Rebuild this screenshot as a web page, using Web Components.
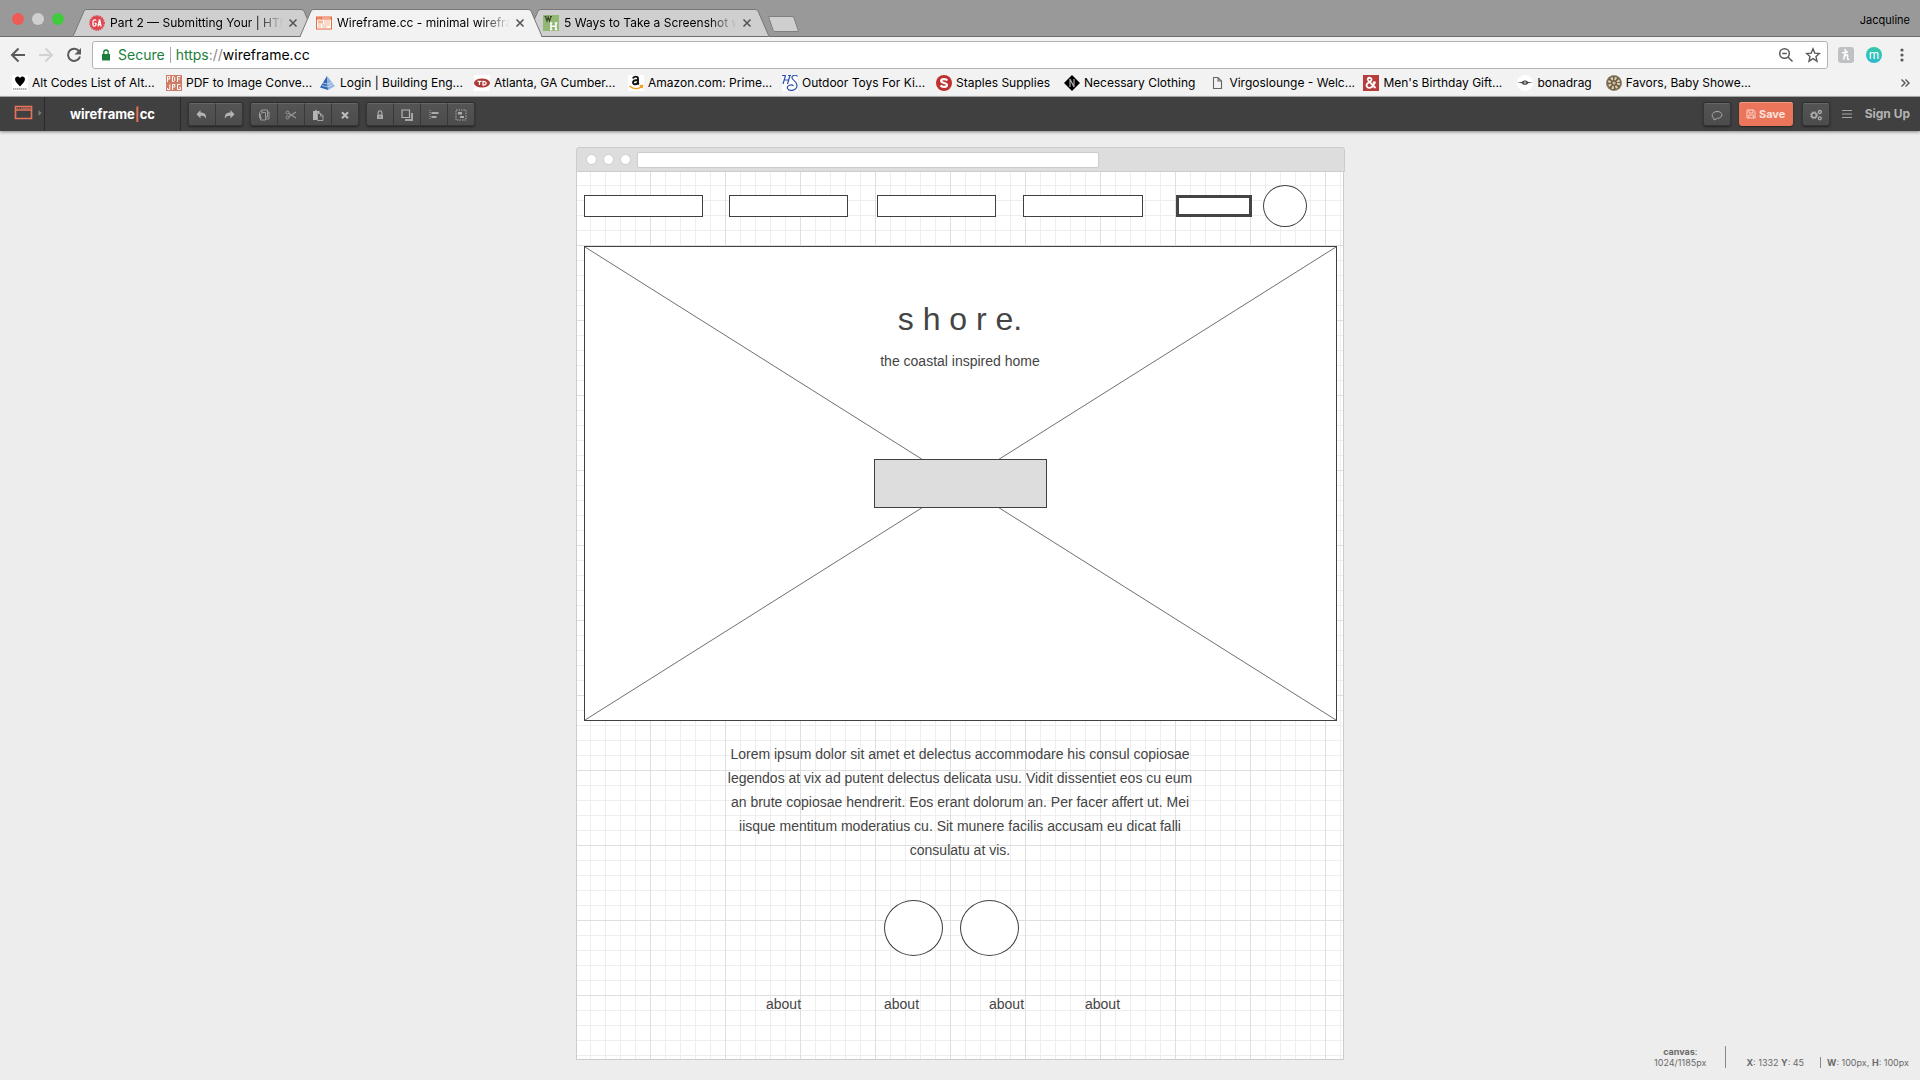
<!DOCTYPE html>
<html lang="en">
<head>
<meta charset="utf-8">
<title>Wireframe.cc - minimal wireframing tool</title>
<style>
  html, body { margin: 0; }
  body { font: 12px/16px Inter, "Liberation Sans", sans-serif; color: #000; background: #ededed; }
</style>
</head>
<body>
<app-window></app-window>

<script>
const ICONS = {
  ga: ['0 0 16 16', '<circle cx="8" cy="8" r="7" fill="#e0444f"/><circle cx="8" cy="8" r="7.2" fill="none" stroke="#e0444f" stroke-width="1.4" stroke-dasharray="1.3 1"/><path d="M7 5.6C6.700 4.500 4 4.400 4 6.500v3c0 2.100 3 2 3 0V8.300H5.600M9 11.500 10.400 4.800h.3L12.100 11.500M9.400 9.500h2.300" fill="none" stroke="#fff" stroke-width="1.300"/>'],
  wire: ['0 0 16 16', '<path fill="#e8693f" d="M0 1.500h16v13H0z"/><path fill="#fff" d="M1 4.500h14v9H1z"/><path stroke="#fff" stroke-width=".8" d="M1.500 3h1M3.500 3h1M6 3h8.500"/><path fill="#f4b493" d="M2 5.500h5v3H2zM8 5.500h6v1H8zM8 7.500h6v1H8zM2 9.500h3v1H2zM6 9.500h8v1H6zM2 11.500h3v1H2zM6 11.500h5v1H6z"/>'],
  wikihow: ['0 0 16 16', '<path fill="#93b874" d="M0 0h16v16H0z"/><path d="M1.500 1.500h2M2.500 1.500 4 6l1.200-4L6.500 6 8 1.500M7 1.500h2" fill="none" stroke="#37492a" stroke-width="1.200"/><path d="M8 8v6.500M13 8v6.500M8 11.200h5M7 8h2.300M11.800 8h2.500M7 14.500h2.300M11.800 14.500h2.500" fill="none" stroke="#fff" stroke-width="1.500"/>'],
  close: ['0 0 10 10', '<path d="M1.500 1.500l7 7M8.500 1.500l-7 7" stroke="#555" stroke-width="1.600"/>'],
  back: ['0 0 16 16', '<path d="M15 8H2M8.500 1.500 2 8l6.500 6.500" fill="none" stroke="#5a5a5a" stroke-width="2"/>'],
  forward: ['0 0 16 16', '<path d="M1 8h13M7.500 1.500 14 8l-6.500 6.500" fill="none" stroke="#d2d2d2" stroke-width="2"/>'],
  reload: ['0 0 16 16', '<path d="M13.300 4.500A6.100 6.100 0 1 0 14 9.500" fill="none" stroke="#5a5a5a" stroke-width="2"/><path d="M15 1v6.500H8.500z" fill="#5a5a5a"/>'],
  lock: ['0 0 10 12', '<path d="M1 5h8v6.500H1z" fill="#1b7f3b"/><path d="M2.800 5V3.200a2.200 2.200 0 0 1 4.400 0V5" fill="none" stroke="#1b7f3b" stroke-width="1.300"/>'],
  zoomout: ['0 0 16 16', '<circle cx="6.500" cy="6.500" r="4.800" fill="none" stroke="#5a5a5a" stroke-width="1.500"/><path d="M4.200 6.500h4.600M10.200 10.200l4.300 4.300" stroke="#5a5a5a" stroke-width="1.500"/>'],
  star: ['0 0 16 16', '<path d="M8 1.800l1.800 4.300 4.700.4-3.500 3.100 1 4.600L8 11.700l-4 2.500 1-4.600L1.500 6.500l4.700-.4z" fill="none" stroke="#5a5a5a" stroke-width="1.400"/>'],
  honey: ['0 0 16 16', '<rect width="16" height="16" rx="3" fill="#bfc1c3"/><path d="M6 3.200c1.800-.9 2.100.8 1.200 2.800L5.500 12.500M4 5.800l6-.9M6.300 10c1.200-2.700 3.900-2.900 3.300-.5-.5 2-.3 3.500 1.600 2.500" fill="none" stroke="#fff" stroke-width="1.500"/>'],
  kebab: ['0 0 4 14', '<circle cx="2" cy="2" r="1.600" fill="#5a5a5a"/><circle cx="2" cy="7" r="1.600" fill="#5a5a5a"/><circle cx="2" cy="12" r="1.600" fill="#5a5a5a"/>'],
  more: ['0 0 10 10', '<path d="M1.500 1.500 5 5 1.500 8.500M5.500 1.500 9 5 5.500 8.500" fill="none" stroke="#555" stroke-width="1.400"/>'],
  heart: ['0 0 16 16', '<path fill="#fff" d="M0 0h16v16H0z"/><path d="M8 11.500C5 8 3 6.500 3 4c0-3 4-3.500 5-1 1-2.500 5-2 5 1 0 2.500-2 4-5 7.500z"/><path d="M1 14h14" stroke="#666" stroke-dasharray="1 .5 2 .5"/>'],
  pdf: ['0 0 16 16', '<path fill="#cf7d66" d="M0 0h16v16H0z"/><path d="M1.500 7V1.500h2.300V4H1.500M6.500 1.500h1.200l1 1v3l-1 1H6.500zM11.500 7V1.500h3M11.500 4h2.300M3.800 9.500v5H1.500V13M6.500 15V9.500h2.300V12H6.500M14.300 9.500h-2.800v5h2.800v-2.300h-1" fill="none" stroke="#fff"/>'],
  pyramid: ['0 0 16 16', '<path fill="#2f66b4" d="M7 1 0 12.500 8 15z"/><path fill="#8fb3df" d="M7 1l8 10-7 4z"/><path d="M3 8l4.500 1L12 7.500M2 10.500l5.600 1.300 6-2.500" stroke="#dce9f7" stroke-width=".7" fill="none"/>'],
  td: ['0 0 16 16', '<path fill="#fff" d="M0 0h16v16H0z"/><ellipse cx="8" cy="8" rx="8" ry="4.600" fill="#ad3a37"/><path d="M3.500 6.400h4M5.500 6.400V10M9 6.400V10c4.200.2 4.200-3.700 0-3.600z" fill="none" stroke="#fff" stroke-width="1.300"/>'],
  amazon: ['0 0 16 16', '<path fill="#fff" d="M0 0h16v16H0z"/><path d="M5 3.500c.6-2.500 5-2.500 5 0v4.300c0 .8.300 1.200.8 1.700M10 5C6.500 5 5 5.700 5 7.500 5 10 9.500 9.800 10 7" fill="none" stroke="#111" stroke-width="1.900"/><path d="M1.500 11c3.500 3.300 9 3.300 12 .8M11.700 10.800l2.800-.2-.6 2.700" fill="none" stroke="#f49b1c" stroke-width="1.400"/>'],
  hs: ['0 0 16 16', '<path fill="#fff" d="M0 0h16v16H0z"/><path d="M3.500.5 1 9M8 .5 5.500 9M2 5h5M15.500 1.500C14-.5 9.500 0 10 3c.3 2.300 5 3 5 7.500 0 5-7.500 6.500-9.500 3-1.200-3 4-5 6-2.500M0 .5h4M6 .5h3" fill="none" stroke="#2c4fae" stroke-width="1.200"/>'],
  staples: ['0 0 16 16', '<circle cx="8" cy="8" r="8" fill="#bf3030"/><path d="M11.300 5.500C10 3.600 5.200 3.600 5.200 6c0 2.500 5.800 1.400 5.800 4 0 2.500-5 2.500-6.500.4" fill="none" stroke="#fff" stroke-width="2.200"/>'],
  diamond: ['0 0 16 16', '<path d="M8 0l8 8-8 8-8-8z"/><path d="M6 12V4l4 8V4" fill="none" stroke="#aaa" stroke-width="1.200"/>'],
  page: ['0 0 16 16', '<path d="M4.500 2.500h4.500l3.500 3.500v7.500h-8zM9 2.500V6h3.500" fill="none" stroke="#666" stroke-width="1.100"/>'],
  amp: ['0 0 16 16', '<path fill="#b73d3d" d="M0 0h16v16H0z"/><path d="M12.500 13 5.500 6C3.500 3.500 5.500 2.500 7 2.800c2 .4 2 2.500.3 3.600L5 8c-3 2.500-.8 5 1.500 4.800 2.500-.2 4.300-2.300 5-5.300M9.800 7.500h3" fill="none" stroke="#fff" stroke-width="1.800"/>'],
  bona: ['0 0 16 16', '<circle cx="8" cy="8" r="8" fill="#fff"/><path d="M0 7.600 5 7c1-2 5-2 6 0l5 .6-5 .7c-1 2-5 2-6 0z" fill="#444"/><circle cx="8" cy="7.600" r="1.300" fill="#aaa"/>'],
  favor: ['0 0 16 16', '<circle cx="8" cy="8" r="7.800" fill="#6d5c48"/><circle cx="8" cy="8" r="4.600" fill="none" stroke="#dccfae" stroke-width="3" stroke-dasharray="2 1.610"/><circle cx="8" cy="8" r="1.600" fill="#cdbf9e"/><circle cx="8" cy="8" r="7.300" fill="none" stroke="#a8977c" stroke-dasharray="1.500 1"/>'],
  logo: ['0 0 20 16', '<path d="M1.500 1.500h16v12h-16zM1.500 5h16" fill="none" stroke="#e8735a" stroke-width="1.600"/><path d="M3 3.200h1M5 3.200h1M7 3.200h9" stroke="#e8735a" stroke-width=".9"/>'],
  caret: ['0 0 4 8', '<path d="M.5 1v6L3.500 4z" fill="#7d7d7d"/>'],
  undo: ['0 0 14 14', '<path d="M5.500 2v2.500c4 0 6.200 2 5.500 6.500-.6-2.500-2.300-3.500-5.500-3.300V10.500L1.500 6.200z" fill="#b3b3b3"/>'],
  redo: ['0 0 14 14', '<path d="M8.500 2v2.500C4.500 4.500 2.300 6.500 3 11c.6-2.500 2.300-3.500 5.500-3.300V10.500l4-4.300z" fill="#b3b3b3"/>'],
  copy: ['0 0 14 14', '<path d="M5 4.500V2h5.500v7H8.500M5 2 2.500 4.500v5.500H5M5 4.500h3.500V12H3.500V6.500zM10.500 4h1.500v7H8.500" fill="none" stroke="#9b9b9b"/>'],
  cut: ['0 0 14 14', '<circle cx="3.500" cy="4.500" r="1.500" fill="none" stroke="#999"/><circle cx="3.500" cy="9.500" r="1.500" fill="none" stroke="#999"/><path d="M4.800 5.200 12 10M4.800 8.800 12 4" stroke="#999" stroke-width="1.200"/>'],
  paste: ['0 0 14 14', '<path d="M2 3h2l1-1.500L6 3h2.500v2H6v7H2z" fill="#b5b5b5"/><path d="M6.500 5.500h3.500l2 2.200v4.800H6.500zM9.500 5.500V8H12" fill="none" stroke="#a2a2a2"/>'],
  del: ['0 0 14 14', '<path d="M4 4.300l6 6M10 4.300l-6 6" stroke="#bbb" stroke-width="2.200"/>'],
  padlock: ['0 0 14 14', '<path d="M4 6.500h6V11H4z" fill="#aaa"/><path d="M5.200 6.500V4.600a1.800 1.800 0 0 1 3.600 0v1.900" fill="none" stroke="#aaa" stroke-width="1.200"/><path d="M6.500 8h1v1.500h-1z" fill="#555"/>'],
  layers: ['0 0 14 14', '<path d="M2 2h7.500v7.500H2z" fill="none" stroke="#b5b5b5" stroke-width="1.200"/><path d="M11 5h2v8H5v-2h6z" fill="#a5a5a5"/>'],
  align: ['0 0 14 14', '<path d="M3 2v10" stroke="#aaa" stroke-dasharray="1 1"/><path d="M4.500 4h7v2h-7zM4.500 8h5v2h-5z" fill="#aaa"/>'],
  group: ['0 0 14 14', '<path d="M2 2h10v10H2z" fill="none" stroke="#aaa" stroke-dasharray="1.500 1"/><path d="M4 4h4v2.500H4zM6 8h4v2H6z" fill="#aaa"/>'],
  bubble: ['0 0 14 14', '<path d="M4 10.500C1 9 1.500 3.800 7 3.500c6.500 0 6.500 6.500.5 6.800L4 12z" fill="none" stroke="#aaa"/>'],
  disk: ['0 0 10 10', '<path d="M1 1h6.500L9 2.500V9H1zM3 1v3h4V1M2.800 9V6h4.500v3" fill="none" stroke="#fcd3c8"/>'],
  gears: ['0 0 14 14', '<circle cx="5" cy="7.200" r="2.400" fill="none" stroke="#b0b0b0" stroke-width="1.500"/><circle cx="5" cy="7.200" r="3.500" fill="none" stroke="#b0b0b0" stroke-width="1" stroke-dasharray="1.400 1.350"/><circle cx="10.800" cy="4" r="1.500" fill="none" stroke="#b0b0b0" stroke-width="1.300"/><circle cx="10.800" cy="10.300" r="1.500" fill="none" stroke="#b0b0b0" stroke-width="1.300"/>'],
  menu: ['0 0 10 10', '<path d="M0 1.500h10M0 5h10M0 8.500h10" stroke="#a5a5a5" stroke-width="1.200"/>']
};

const define = (name, html, setup) => {
  const template = document.createElement('template');
  template.innerHTML = html;
  customElements.define(name, class extends HTMLElement {
    constructor() {
      super();
      this.attachShadow({ mode: 'open' }).append(template.content.cloneNode(true));
    }
    connectedCallback() { if (setup) setup(this, this.shadowRoot); }
  });
};

/* Icon: name picks the drawing, --s / --sh size it */
define('ui-icon', `
<style>
  :host { display: block; flex: none; width: var(--s, 16px); height: var(--sh, var(--s, 16px)); }
  svg { display: block; width: 100%; height: 100%; }
</style>
<svg aria-hidden="true"></svg>`, (el, root) => {
  const [box, body] = ICONS[el.getAttribute('name')];
  const svg = root.querySelector('svg');
  svg.setAttribute('viewBox', box);
  svg.innerHTML = body;
});

define('browser-tab', `
<style>
  :host { display: flex; align-items: center; gap: 5px; position: relative; isolation: isolate; box-sizing: border-box;
    width: 242px; height: 28px; margin-right: -15px; padding: 0 17px 0 16px; --fill: #cfcfcf; }
  :host([active]) { --fill: #f2f2f2; z-index: 1; }
  .shape { position: absolute; inset: 0; width: 100%; height: 100%; z-index: -1; overflow: visible; }
  .shape path { fill: var(--fill); stroke: #777; }
  .shape .base { stroke: #6e6e6e; }
  :host([active]) .shape .base { stroke: #f2f2f2; }
  .title { flex: 1; overflow: hidden; white-space: nowrap; mask-image: linear-gradient(to right, #000 84%, transparent); }
  button { border: 0; padding: 0; background: none; width: 10px; height: 10px; }
</style>
<svg class="shape" viewBox="0 0 242 28" preserveAspectRatio="none" aria-hidden="true">
  <path d="M0 27.500 11 2Q12 .5 14 .5H228Q230 .5 231 2L242 27.500"/><path class="base" d="M1 27.500H241"/>
</svg>
<slot name="icon"></slot><span class="title"><slot></slot></span>
<button aria-label="Close tab"><ui-icon name="close" style="--s:10px"></ui-icon></button>`);

define('tab-strip', `
<style>
  :host { display: flex; align-items: flex-end; height: 37px; background: #999 linear-gradient(#6e6e6e, #6e6e6e) bottom / 100% 1px no-repeat; }
  .lights { display: flex; gap: 8px; padding: 0 9px 12px 12px; }
  .lights button { width: 12px; height: 12px; border: 0; border-radius: 50%; padding: 0; background: var(--c); }
  .new { width: 32px; height: 16px; margin: 0 0 5px 13px; padding: 0; border: 0; background: none; }
  .new svg { display: block; }
  .user { margin-left: auto; padding: 0 10px 9px; border: 0; background: none; font: inherit; font-size: 11px; }
</style>
<div class="lights">
  <button style="--c:#ed5c57" aria-label="Close"></button><button style="--c:#cfcfcf" aria-label="Minimise"></button><button style="--c:#3fcb3c" aria-label="Zoom"></button>
</div>
<browser-tab><ui-icon slot="icon" name="ga"></ui-icon>Part 2 — Submitting Your | HTML</browser-tab>
<browser-tab active><ui-icon slot="icon" name="wire"></ui-icon>Wireframe.cc - minimal wireframing</browser-tab>
<browser-tab><ui-icon slot="icon" name="wikihow"></ui-icon>5 Ways to Take a Screenshot with</browser-tab>
<button class="new" aria-label="New tab"><svg width="32" height="16" viewBox="0 0 32 16"><path d="M1.500.5H25Q26.500.500 27 2L31.500 15.500H8Q6.500 15.500 6 14Z" fill="#cfcfcf" stroke="#808080"/></svg></button>
<button class="user">Jacquline</button>`);

define('address-bar', `
<style>
  :host { display: flex; align-items: center; padding: 4px 16px 0 10px; font-size: 14px; line-height: 20px; }
  button { display: block; border: 0; padding: 0; background: none; }
  .nav { display: flex; gap: 12px; padding-right: 10px; }
  .field { flex: 1; display: flex; align-items: center; box-sizing: border-box; height: 28px; padding: 0 6px 0 8px; border: 1px solid #b3b3b3; border-radius: 3px; background: #fff; }
  .secure { color: #1b7f3b; padding: 0 5px 0 7px; }
  .rule { width: 1px; height: 16px; background: #aaa; margin-right: 5px; }
  .scheme { color: #1b7f3b; } .sep { color: #888; }
  input { flex: 1; border: 0; padding: 0; margin: 0; outline: 0; background: none; font: inherit; color: #000; }
  .tools { display: flex; gap: 11px; }
  .ext { display: flex; align-items: center; gap: 12px; padding-left: 10px; }
  .m { width: 16px; height: 16px; border-radius: 50%; background: linear-gradient(#35c9a8, #2fb9cf); color: #fff; font: 12px/14px Inter, sans-serif; }
  .kebab { padding-left: 6px; }
</style>
<div class="nav">
  <button aria-label="Back"><ui-icon name="back"></ui-icon></button>
  <button aria-label="Forward"><ui-icon name="forward"></ui-icon></button>
  <button aria-label="Reload"><ui-icon name="reload"></ui-icon></button>
</div>
<div class="field">
  <ui-icon name="lock" style="--s:10px;--sh:12px"></ui-icon><span class="secure">Secure</span><span class="rule"></span>
  <span class="scheme">https</span><span class="sep">://</span><input aria-label="Address" value="wireframe.cc">
  <div class="tools"><button aria-label="Zoom out"><ui-icon name="zoomout"></ui-icon></button><button aria-label="Bookmark"><ui-icon name="star"></ui-icon></button></div>
</div>
<div class="ext">
  <button aria-label="Extension"><ui-icon name="honey"></ui-icon></button>
  <button class="m">m</button>
  <button class="kebab" aria-label="Menu"><ui-icon name="kebab" style="--s:4px;--sh:14px"></ui-icon></button>
</div>`);

define('book-mark', `
<style>
  :host { display: block; }
  a { display: flex; gap: 4px; align-items: center; box-sizing: border-box; max-width: 146px; padding-right: 6px; color: #000; text-decoration: none; white-space: nowrap; }
</style>
<a href="#"><slot name="icon"></slot><slot></slot></a>`);

define('bookmarks-bar', `
<style>
  :host { display: flex; align-items: center; gap: 8px; height: 27px; padding: 0 10px 0 12px; border-bottom: 1px solid #b4b4b4; }
  .more { margin-left: auto; border: 0; padding: 0; background: none; }
  book-mark[wide] { width: 146px; }
</style>
<book-mark wide><ui-icon slot="icon" name="heart"></ui-icon>Alt Codes List of Alt...</book-mark>
<book-mark wide><ui-icon slot="icon" name="pdf"></ui-icon>PDF to Image Conve...</book-mark>
<book-mark wide><ui-icon slot="icon" name="pyramid"></ui-icon>Login | Building Eng...</book-mark>
<book-mark wide><ui-icon slot="icon" name="td"></ui-icon>Atlanta, GA Cumber...</book-mark>
<book-mark wide><ui-icon slot="icon" name="amazon"></ui-icon>Amazon.com: Prime...</book-mark>
<book-mark wide><ui-icon slot="icon" name="hs"></ui-icon>Outdoor Toys For Ki...</book-mark>
<book-mark><ui-icon slot="icon" name="staples"></ui-icon>Staples Supplies</book-mark>
<book-mark><ui-icon slot="icon" name="diamond"></ui-icon>Necessary Clothing</book-mark>
<book-mark wide><ui-icon slot="icon" name="page"></ui-icon>Virgoslounge - Welc...</book-mark>
<book-mark wide><ui-icon slot="icon" name="amp"></ui-icon>Men's Birthday Gift...</book-mark>
<book-mark><ui-icon slot="icon" name="bona"></ui-icon>bonadrag</book-mark>
<book-mark><ui-icon slot="icon" name="favor"></ui-icon>Favors, Baby Showe...</book-mark>
<button class="more" aria-label="More bookmarks"><ui-icon name="more" style="--s:10px"></ui-icon></button>`);

define('tool-group', `
<style>
  :host { display: flex; border-radius: 3px; box-shadow: 0 1px 2px #222; background: #505050; border: 1px solid #363636; border-top-color: #2e2e2e; box-sizing: border-box; height: 24px; overflow: hidden; }
  button { width: 26px; padding: 0; border: 0; border-top: 1px solid #666; background: linear-gradient(#545454, #4c4c4c); display: grid; place-items: center; box-sizing: border-box; }
  button + button { border-left: 1px solid #383838; width: 27px; }
</style>`, (el, root) => {
  for (const name of el.getAttribute('tools').split(' ')) {
    const b = document.createElement('button');
    b.setAttribute('aria-label', name);
    b.innerHTML = `<ui-icon name="${name}" style="--s:14px"></ui-icon>`;
    root.append(b);
  }
});

define('editor-toolbar', `
<style>
  :host { display: flex; align-items: center; height: 34px; background: #404040; box-shadow: 0 1px 3px rgba(0,0,0,.45); position: relative; color: #b3b3b3; }
  button { border: 0; padding: 0; background: none; font: inherit; color: inherit; }
  .logo { display: flex; align-items: center; gap: 4px; align-self: stretch; box-sizing: border-box; width: 45px; padding: 0 0 2px 14px; border-right: 1px solid #2a2a2a; }
  .brand { align-self: stretch; display: grid; place-items: center; width: 135px; border-right: 1px solid #2a2a2a; color: #fff; font: 700 13px/32px Inter, sans-serif; text-decoration: none; }
  .brand i { font-style: normal; color: #e8735a; }
  .tools { display: flex; gap: 7px; padding-left: 7px; }
  .right { display: flex; align-items: center; margin-left: auto; padding-right: 10px; }
  .save { display: flex; align-items: center; justify-content: center; gap: 3px; box-sizing: border-box; width: 54px; height: 24px; margin: 0 9px 0 8px; border-radius: 3px; background: #ea755a; box-shadow: 0 1px 2px #222, inset 0 1px #f39a83; color: #fde3dc; font-weight: 700; font-size: 11px; }
  .menu { padding: 0 13px 0 12px; }
  .sign { color: #b3b3b3; text-decoration: none; font-weight: 700; }
</style>
<button class="logo" aria-label="Browser window"><ui-icon name="logo" style="--s:20px;--sh:16px"></ui-icon><ui-icon name="caret" style="--s:4px;--sh:8px"></ui-icon></button>
<a class="brand" href="#"><span>wireframe<i>|</i>cc</span></a>
<div class="tools">
  <tool-group tools="undo redo"></tool-group>
  <tool-group tools="copy cut paste del"></tool-group>
  <tool-group tools="padlock layers align group"></tool-group>
</div>
<div class="right">
  <tool-group tools="bubble"></tool-group>
  <button class="save"><ui-icon name="disk" style="--s:10px"></ui-icon>Save</button>
  <tool-group tools="gears"></tool-group>
  <button class="menu" aria-label="Menu"><ui-icon name="menu" style="--s:10px"></ui-icon></button>
  <a class="sign" href="#">Sign Up</a>
</div>`);

/* A shape drawn on the free canvas; x, y, w, h are its place there */
define('wf-shape', `
<style>
  :host { position: absolute; box-sizing: border-box; border: 1px solid #404040; background: #fff; }
  :host([kind="ellipse"]) { border-radius: 50%; }
  :host([kind="bold"]) { border-width: 3px; border-color: #444; }
  :host([kind="button"]) { background: #ddd; }
  :host([kind="text"]) { border: 0; background: none; text-align: center; }
  svg { display: none; width: 100%; height: 100%; }
  :host([kind="image"]) svg { display: block; }
</style>
<svg viewBox="0 0 100 100" preserveAspectRatio="none" aria-hidden="true"><path d="M0 0 100 100M100 0 0 100" stroke="#707070" vector-effect="non-scaling-stroke"/></svg>
<slot></slot>`, el => {
  for (const [attr, prop] of [['x', 'left'], ['y', 'top'], ['w', 'width'], ['h', 'height']])
    if (el.hasAttribute(attr)) el.style[prop] = el.getAttribute(attr) + 'px';
});

define('wire-canvas', `
<style>
  :host { display: block; width: 768px; margin: 16px auto 20px; font: 14px/24px "Liberation Sans", Arial, sans-serif; color: #444; }
  .head { display: flex; align-items: center; height: 23px; padding-left: 9px; border: 1px solid #ccc; border-radius: 3px 3px 0 0; background: #ddd; margin-right: -1px; }
  .dots { display: flex; gap: 6px; padding-right: 6px; }
  .dots i { width: 9px; height: 9px; border: 1px solid #ccc; border-radius: 50%; background: #fff; }
  .url { width: 460px; height: 14px; border: 1px solid #ccc; border-radius: 2px; background: #fff; }
  .sheet { position: relative; height: 887px; border: 1px solid #ccc; border-top: 0; background-color: #fff;
    background-image: linear-gradient(#dfdfdf 1px, transparent 1px), linear-gradient(90deg, #dfdfdf 1px, transparent 1px), linear-gradient(#eee 1px, transparent 1px), linear-gradient(90deg, #eee 1px, transparent 1px);
    background-size: 75px 75px, 75px 75px, 15px 15px, 15px 15px; background-position: -2px -2px; }
  h1 { margin: 0; font-size: 32px; line-height: 40px; font-weight: 400; white-space: nowrap; }
  p { margin: 0; }
</style>
<div class="head"><div class="dots"><i></i><i></i><i></i></div><div class="url"></div></div>
<div class="sheet">
  <wf-shape x="7" y="23" w="119" h="22"></wf-shape>
  <wf-shape x="152" y="23" w="119" h="22"></wf-shape>
  <wf-shape x="300" y="23" w="119" h="22"></wf-shape>
  <wf-shape x="446" y="23" w="120" h="22"></wf-shape>
  <wf-shape kind="bold" x="599" y="23" w="76" h="22"></wf-shape>
  <wf-shape kind="ellipse" x="686" y="13" w="44" h="42"></wf-shape>
  <wf-shape kind="image" x="7" y="74" w="753" h="475"></wf-shape>
  <wf-shape kind="text" x="283" y="127" w="200"><h1>s h o r e.</h1></wf-shape>
  <wf-shape kind="text" x="283" y="177" w="200"><p>the coastal inspired home</p></wf-shape>
  <wf-shape kind="button" x="297" y="287" w="173" h="49"></wf-shape>
  <wf-shape kind="text" x="148" y="570" w="470"><p>Lorem ipsum dolor sit amet et delectus accommodare his consul copiosae legendos at vix ad putent delectus delicata usu. Vidit dissentiet eos cu eum an brute copiosae hendrerit. Eos erant dolorum an. Per facer affert ut. Mei iisque mentitum moderatius cu. Sit munere facilis accusam eu dicat falli consulatu at vis.</p></wf-shape>
  <wf-shape kind="ellipse" x="307" y="728" w="59" h="56"></wf-shape>
  <wf-shape kind="ellipse" x="383" y="728" w="59" h="56"></wf-shape>
  <wf-shape kind="text" x="189" y="820">about</wf-shape>
  <wf-shape kind="text" x="307" y="820">about</wf-shape>
  <wf-shape kind="text" x="412" y="820">about</wf-shape>
  <wf-shape kind="text" x="508" y="820">about</wf-shape>
</div>`);

define('status-bar', `
<style>
  :host { position: absolute; right: 11px; bottom: 12px; display: flex; align-items: flex-end; font-size: 9px; line-height: 11px; color: #6a6a6a; white-space: nowrap; }
  .size { text-align: center; padding-right: 19px; }
  .pos { border-left: 1px solid #888; height: 22px; padding: 0 16px 0 20px; display: flex; align-items: flex-end; }
  .dim { border-left: 1px solid #888; padding-left: 6px; }
</style>
<div class="size"><b>canvas</b>:<br>1024/1185px</div>
<div class="pos"><span><b>X</b>: 1332 <b>Y</b>: 45</span></div>
<div class="dim"><b>W</b>: 100px, <b>H</b>: 100px</div>`);

define('app-window', `
<style>
  :host { display: flex; flex-direction: column; min-height: 100vh; }
  header { background: #f2f2f2; }
  main { position: relative; flex: 1; display: flow-root; }
</style>
<header><tab-strip></tab-strip><address-bar></address-bar><bookmarks-bar></bookmarks-bar></header>
<editor-toolbar></editor-toolbar>
<main><wire-canvas></wire-canvas><status-bar></status-bar></main>`);
</script>
</body>
</html>
